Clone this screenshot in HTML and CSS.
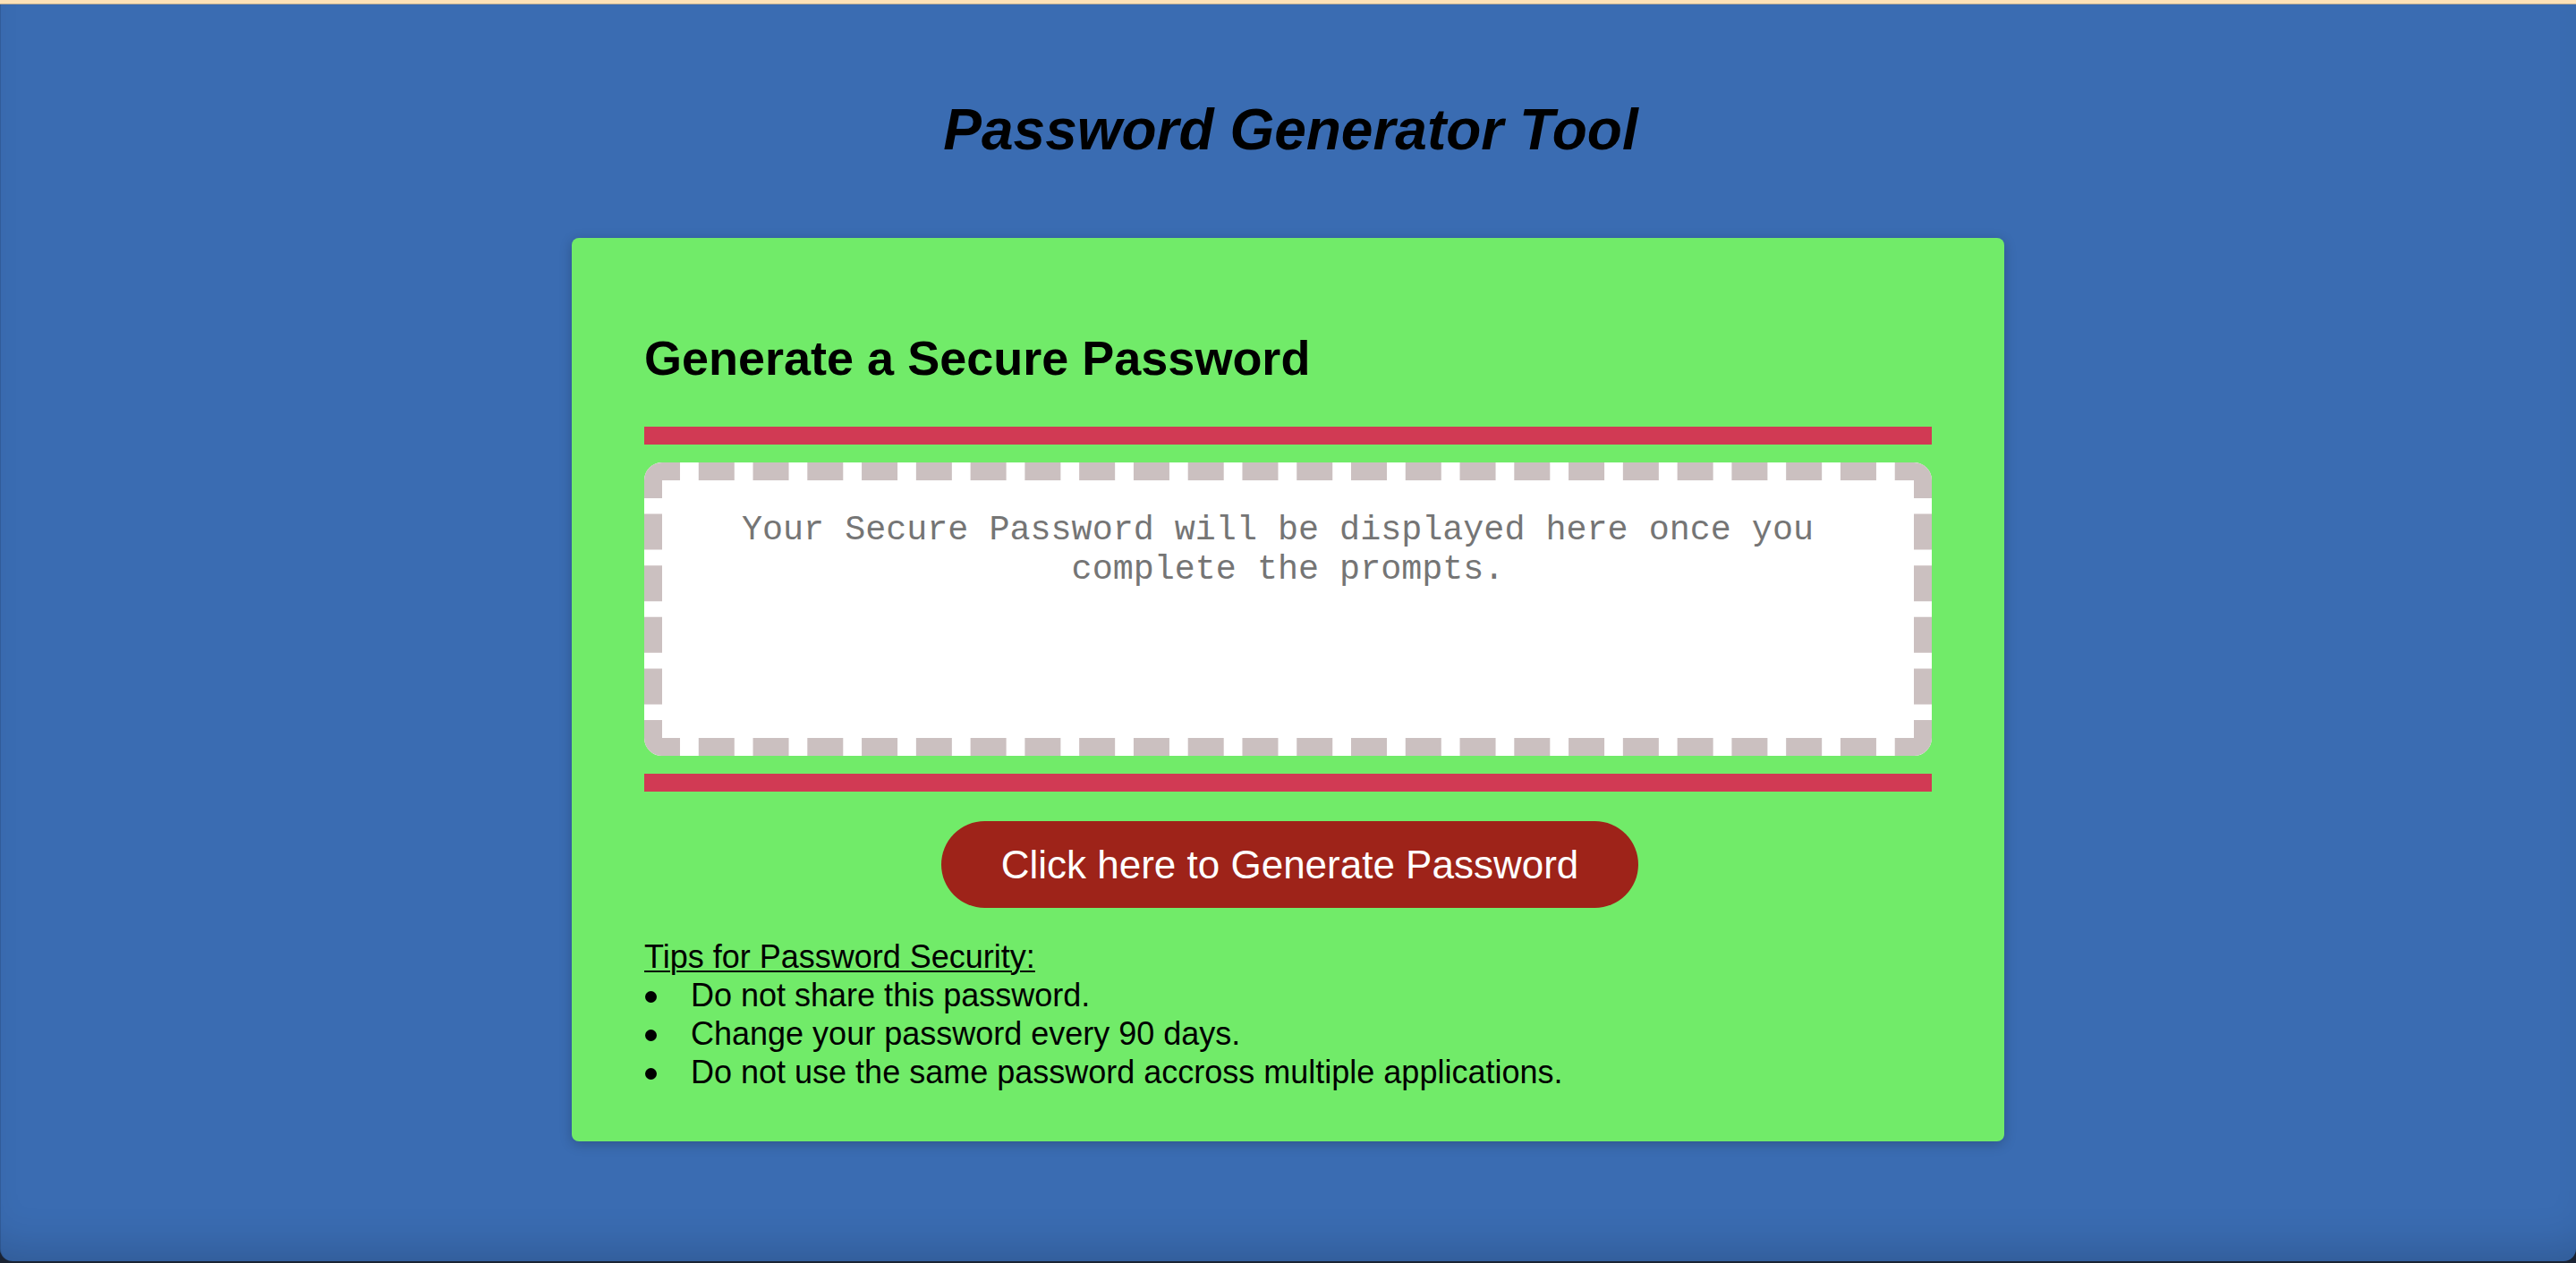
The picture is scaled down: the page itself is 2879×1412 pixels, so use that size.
FILE: index.html
```html
<!DOCTYPE html>
<html lang="en">
<head>
<meta charset="utf-8">
<title>Password Generator</title>
<link rel="stylesheet" href="styles.css">
</head>
<body>
<div class="topbar"></div>
<div class="window">
  <header class="wrapper">
    <h1 class="title">Password Generator Tool</h1>
  </header>
  <main class="card">
    <h2 class="card-title">Generate a Secure Password</h2>
    <div class="output-wrap">
      <div class="password-box">
        <textarea class="password" readonly placeholder="Your Secure Password will be displayed here once you complete the prompts."></textarea>
        <svg class="dashes" viewBox="0 0 1439 328" preserveAspectRatio="none" aria-hidden="true">
          <g fill="#cbc0c0">
            <path d="M0 40 V20 A20 20 0 0 1 20 0 H40 V20 H20 V40 Z"/>
            <path d="M1399 0 H1419 A20 20 0 0 1 1439 20 V40 H1419 V20 H1399 Z"/>
            <path d="M1439 288 V308 A20 20 0 0 1 1419 328 H1399 V308 H1419 V288 Z"/>
            <path d="M40 328 H20 A20 20 0 0 1 0 308 V288 H20 V308 H40 Z"/>
          </g>
          <g stroke="#cbc0c0" stroke-width="20" fill="none" stroke-dasharray="40 20.77" stroke-dashoffset="40">
            <line x1="40" y1="10" x2="1399" y2="10"/>
            <line x1="40" y1="318" x2="1399" y2="318"/>
          </g>
          <g stroke="#cbc0c0" stroke-width="20" fill="none" stroke-dasharray="40 17.6" stroke-dashoffset="40">
            <line x1="10" y1="40" x2="10" y2="288"/>
            <line x1="1429" y1="40" x2="1429" y2="288"/>
          </g>
        </svg>
      </div>
    </div>
    <div class="actions">
      <button class="btn" type="button">Click here to Generate Password</button>
    </div>
    <div class="tips">
      <p class="tips-title">Tips for Password Security:</p>
      <ul class="tips-list">
        <li>Do not share this password.</li>
        <li>Change your password every 90 days.</li>
        <li>Do not use the same password accross multiple applications.</li>
      </ul>
    </div>
  </main>
</div>
</body>
</html>
```

FILE: styles.css
```css
html, body {
  margin: 0;
  padding: 0;
}

body {
  background: #1a2333;
  font-family: "Liberation Sans", Arial, Helvetica, sans-serif;
  color: #000;
  height: 1412px;
  overflow: hidden;
}

.topbar {
  height: 4px;
  background: #fde1b7;
  border-bottom: 1px solid #b9ab95;
}

.window {
  height: 1405px;
  box-sizing: border-box;
  background: #3a6cb2;
  border-radius: 0 0 14px 14px;
  box-shadow: inset 0 -40px 50px -30px rgba(0, 0, 0, 0.18), inset 1px 0 0 rgba(0,0,0,0.12);
  padding-top: 103px;
}

.wrapper {
  display: flex;
  justify-content: center;
}

.title {
  margin: 0;
  font-size: 64px;
  line-height: 74px;
  font-weight: bold;
  font-style: italic;
  position: relative;
  left: 3px;
}

.card {
  display: block;
  width: 1601px;
  box-sizing: border-box;
  margin: 84px auto 0;
  padding: 104px 81px 56px;
  background: #71eb69;
  border-radius: 8px;
  box-shadow: 0 3px 14px rgba(0, 0, 0, 0.22);
}

.card-title {
  margin: 0;
  font-size: 54px;
  line-height: 60px;
  font-weight: bold;
}

.output-wrap {
  margin-top: 47px;
  border-top: 20px solid #d13a54;
  border-bottom: 20px solid #d13a54;
  padding: 20px 0;
}

.password-box {
  position: relative;
  height: 328px;
}

.password {
  display: block;
  width: 100%;
  height: 328px;
  box-sizing: border-box;
  margin: 0;
  border: 20px solid #fff;
  border-radius: 20px;
  padding: 34px 30px 30px;
  background: #fff;
  font-family: "Liberation Mono", "Courier New", monospace;
  font-size: 38.4px;
  line-height: 44px;
  text-align: center;
  white-space: break-spaces;
  resize: none;
  outline: none;
  color: #222;
}

.password::placeholder {
  color: #757575;
  opacity: 1;
  white-space: break-spaces;
}

.dashes {
  position: absolute;
  left: 0;
  top: 0;
  width: 100%;
  height: 100%;
  pointer-events: none;
}

.actions {
  margin-top: 33px;
  display: flex;
  justify-content: center;
}

.btn {
  font-family: "Liberation Sans", Arial, Helvetica, sans-serif;
  font-size: 44px;
  line-height: 51px;
  padding: 23px 67px;
  border: none;
  border-radius: 49px;
  background: #9e2319;
  color: #fff;
  cursor: pointer;
  position: relative;
  left: 2px;
}

.tips {
  margin-top: 33px;
  font-size: 36px;
  line-height: 43px;
}

.tips-title {
  margin: 0;
  text-decoration: underline;
  text-decoration-thickness: 2px;
  text-underline-offset: 3px;
}

.tips-list {
  margin: 0;
  padding: 0;
  list-style: none;
}

.tips-list li {
  display: flex;
  align-items: center;
}

.tips-list li::before {
  content: "";
  flex: 0 0 13px;
  width: 13px;
  height: 13px;
  border-radius: 50%;
  background: #000;
  margin-left: 1px;
  margin-right: 38px;
  position: relative;
  top: 2px;
}
```
